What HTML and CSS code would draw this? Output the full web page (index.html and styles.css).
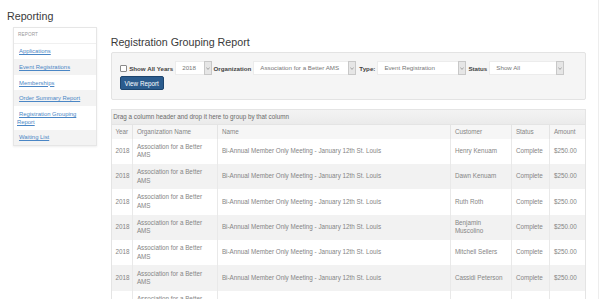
FILE: index.html
```html
<!DOCTYPE html>
<html lang="en">
<head>
  <meta charset="UTF-8">
  <meta name="viewport" content="width=device-width, initial-scale=1">
  <title>Reporting - Registration Grouping Report</title>
  <link rel="stylesheet" href="styles.css">
</head>
<body>
  <div class="page">
    <h1 class="page-title">Reporting</h1>

    <div class="layout">
      <!-- side menu -->
      <aside class="side-nav">
        <div class="side-nav-head">REPORT</div>
        <ul>
          <li><a href="#">Applications</a></li>
          <li><a href="#">Event Registrations</a></li>
          <li><a href="#">Memberships</a></li>
          <li><a href="#">Order Summary Report</a></li>
          <li><a href="#">Registration Grouping Report</a></li>
          <li><a href="#">Waiting List</a></li>
        </ul>
      </aside>

      <!-- report -->
      <main class="report">
        <h2 class="report-title">Registration Grouping Report</h2>

        <div class="filters">
          <div class="filter-row">
            <span class="check"></span>
            <label class="filter-label">Show All Years</label>
            <div class="select select-year">
              <span class="select-value">2018</span>
              <span class="select-arrow"><svg width="4" height="3" viewBox="0 0 4 3"><polyline points="0.4,0.5 2,2.4 3.6,0.5" fill="none" stroke="#888" stroke-width="0.7"/></svg></span>
            </div>
            <label class="filter-label">Organization</label>
            <div class="select select-org">
              <span class="select-value">Association for a Better AMS</span>
              <span class="select-arrow"><svg width="4" height="3" viewBox="0 0 4 3"><polyline points="0.4,0.5 2,2.4 3.6,0.5" fill="none" stroke="#888" stroke-width="0.7"/></svg></span>
            </div>
            <label class="filter-label label-type">Type:</label>
            <div class="select select-type">
              <span class="select-value">Event Registration</span>
              <span class="select-arrow"><svg width="4" height="3" viewBox="0 0 4 3"><polyline points="0.4,0.5 2,2.4 3.6,0.5" fill="none" stroke="#888" stroke-width="0.7"/></svg></span>
            </div>
            <label class="filter-label">Status</label>
            <div class="select select-status">
              <span class="select-value">Show All</span>
              <span class="select-arrow"><svg width="4" height="3" viewBox="0 0 4 3"><polyline points="0.4,0.5 2,2.4 3.6,0.5" fill="none" stroke="#888" stroke-width="0.7"/></svg></span>
            </div>
          </div>
          <button class="btn-primary">View Report</button>
        </div>

        <div class="grid">
          <div class="grid-group">Drag a column header and drop it here to group by that column</div>
          <table>
            <colgroup>
              <col style="width:21px">
              <col style="width:85px">
              <col style="width:233px">
              <col style="width:61px">
              <col style="width:38px">
              <col style="width:35px">
            </colgroup>
            <thead>
              <tr>
                <th>Year</th><th>Organization Name</th><th>Name</th><th>Customer</th><th>Status</th><th>Amount</th>
              </tr>
            </thead>
            <tbody>
              <tr><td>2018</td><td>Association for a Better AMS</td><td>Bi-Annual Member Only Meeting - January 12th St. Louis</td><td>Henry Kenuam</td><td>Complete</td><td>$250.00</td></tr>
              <tr><td>2018</td><td>Association for a Better AMS</td><td>Bi-Annual Member Only Meeting - January 12th St. Louis</td><td>Dawn Kenuam</td><td>Complete</td><td>$250.00</td></tr>
              <tr><td>2018</td><td>Association for a Better AMS</td><td>Bi-Annual Member Only Meeting - January 12th St. Louis</td><td>Ruth Roth</td><td>Complete</td><td>$250.00</td></tr>
              <tr><td>2018</td><td>Association for a Better AMS</td><td>Bi-Annual Member Only Meeting - January 12th St. Louis</td><td>Benjamin Muscolino</td><td>Complete</td><td>$250.00</td></tr>
              <tr><td>2018</td><td>Association for a Better AMS</td><td>Bi-Annual Member Only Meeting - January 12th St. Louis</td><td>Mitchell Sellers</td><td>Complete</td><td>$250.00</td></tr>
              <tr><td>2018</td><td>Association for a Better AMS</td><td>Bi-Annual Member Only Meeting - January 12th St. Louis</td><td>Cassidi Peterson</td><td>Complete</td><td>$250.00</td></tr>
              <tr><td></td><td>Association for a Better</td><td></td><td></td><td></td><td></td></tr>
            </tbody>
          </table>
        </div>
      </main>
    </div>
  </div>
</body>
</html>
```
FILE: styles.css
```css
:root {
  --color-text:   #333333;
  --color-muted:  #858585;
  --color-line:   #e4e4e4;
  --color-stripe: #f2f2f2;
  --color-link:   #4a86c5;
  --color-btn:    #2b5c8e;
  --font-base: 'Liberation Sans', Arial, sans-serif;
}
*, *::before, *::after { box-sizing: border-box; }
body {
  margin: 0;
  font-family: var(--font-base);
  color: var(--color-text);
  background: #fff;
}
.page {
  width: 599px;
  height: 299px;
  overflow: hidden;
  padding-left: 7px;
  border-right: 1px solid #ededed;
}
.page-title {
  margin: 0 0 5px;
  padding-top: 10px;
  font-size: 10.7px;
  line-height: 12px;
  font-weight: normal;
  color: #3a3a3a;
}
.layout { display: flex; align-items: flex-start; }

/* side menu */
.side-nav {
  width: 84.4px;
  margin-left: 6px;
  border: 1px solid #e6e6e6;
  box-shadow: 0 1px 2px rgba(0,0,0,0.07);
  background: #fff;
}
.side-nav-head {
  padding: 0 4px;
  line-height: 14.6px;
  font-size: 4.7px;
  color: #999;
  letter-spacing: .1px;
  border-bottom: 1px solid #f0f0f0;
}
.side-nav ul { list-style: none; margin: 0; padding: 0; }
.side-nav li {
  padding: 3.8px 3px;
  line-height: 8px;
  font-size: 5.9px;
}
.side-nav li:nth-child(even) { background: #f3f3f3; }
.side-nav a {
  color: var(--color-link);
  text-decoration: underline;
  padding-left: 2px;
}

/* report area */
.report { width: 475px; margin-left: 13.3px; }
.report-title {
  margin: 9px 0 4px;
  font-size: 10.7px;
  line-height: 12px;
  font-weight: normal;
  color: #3a3a3a;
}
.filters {
  height: 48px;
  padding: 8px;
  background: #f5f5f5;
  border: 1px solid #e3e3e3;
  border-radius: 2px;
}
.filter-row {
  display: flex;
  align-items: center;
  gap: 2px;
  height: 14px;
  margin-bottom: 1px;
}
.check {
  width: 7px; height: 7px;
  margin-right: 0.5px;
  background: #fff;
  border: 1px solid #8a8a8a;
  border-radius: 1px;
}
.filter-label {
  font-size: 6.2px;
  font-weight: bold;
  color: #444;
  white-space: nowrap;
}
.label-type { margin-left: 1px; }
.select {
  display: flex;
  height: 14px;
  background: #fff;
  border: 1px solid #ececec;
  font-size: 6.2px;
  color: #777;
}
.select-value {
  flex: 1;
  padding-left: 6px;
  line-height: 12px;
  white-space: nowrap;
  overflow: hidden;
}
.select-arrow {
  width: 8px;
  display: flex; align-items: center; justify-content: center;
  background: #e6e6e6;
  border: 1px solid #c8c8c8;
  margin: -1px -1px -1px 0;
}
.select-year   { width: 36.3px; }
.select-org    { width: 103px; }
.select-type   { width: 89px; }
.select-status { width: 74.3px; }

.btn-primary {
  display: block;
  width: 44px; height: 14px;
  padding: 0;
  background: var(--color-btn);
  border: 1px solid #1d456e;
  border-radius: 2px;
  color: #fff;
  font-family: var(--font-base);
  font-size: 6.3px;
  cursor: pointer;
}

/* grid */
.grid {
  margin-top: 9px;
  border: 1px solid var(--color-line);
}
.grid-group {
  height: 14px;
  line-height: 14px;
  padding-left: 1.5px;
  font-size: 6.3px;
  color: #6a6a6a;
  background: linear-gradient(#f3f3f3, #ebebeb);
}
.grid table {
  width: 100%;
  border-collapse: collapse;
  table-layout: fixed;
  font-size: 6.3px;
  color: var(--color-muted);
}
.grid th {
  height: 14px;
  padding: 0 3.7px;
  line-height: 13px;
  text-align: left;
  font-weight: normal;
  background: #f6f6f6;
  border-top: 1px solid var(--color-line);
  border-left: 1px solid var(--color-line);
}
.grid td {
  padding: 4.2px 3.7px;
  line-height: 8.5px;
  vertical-align: middle;
  border-left: 1px solid #e9e9e9;
}
.grid th:first-child,
.grid td:first-child { border-left: none; }
.grid tbody tr:nth-child(even) td { background: var(--color-stripe); }
```
